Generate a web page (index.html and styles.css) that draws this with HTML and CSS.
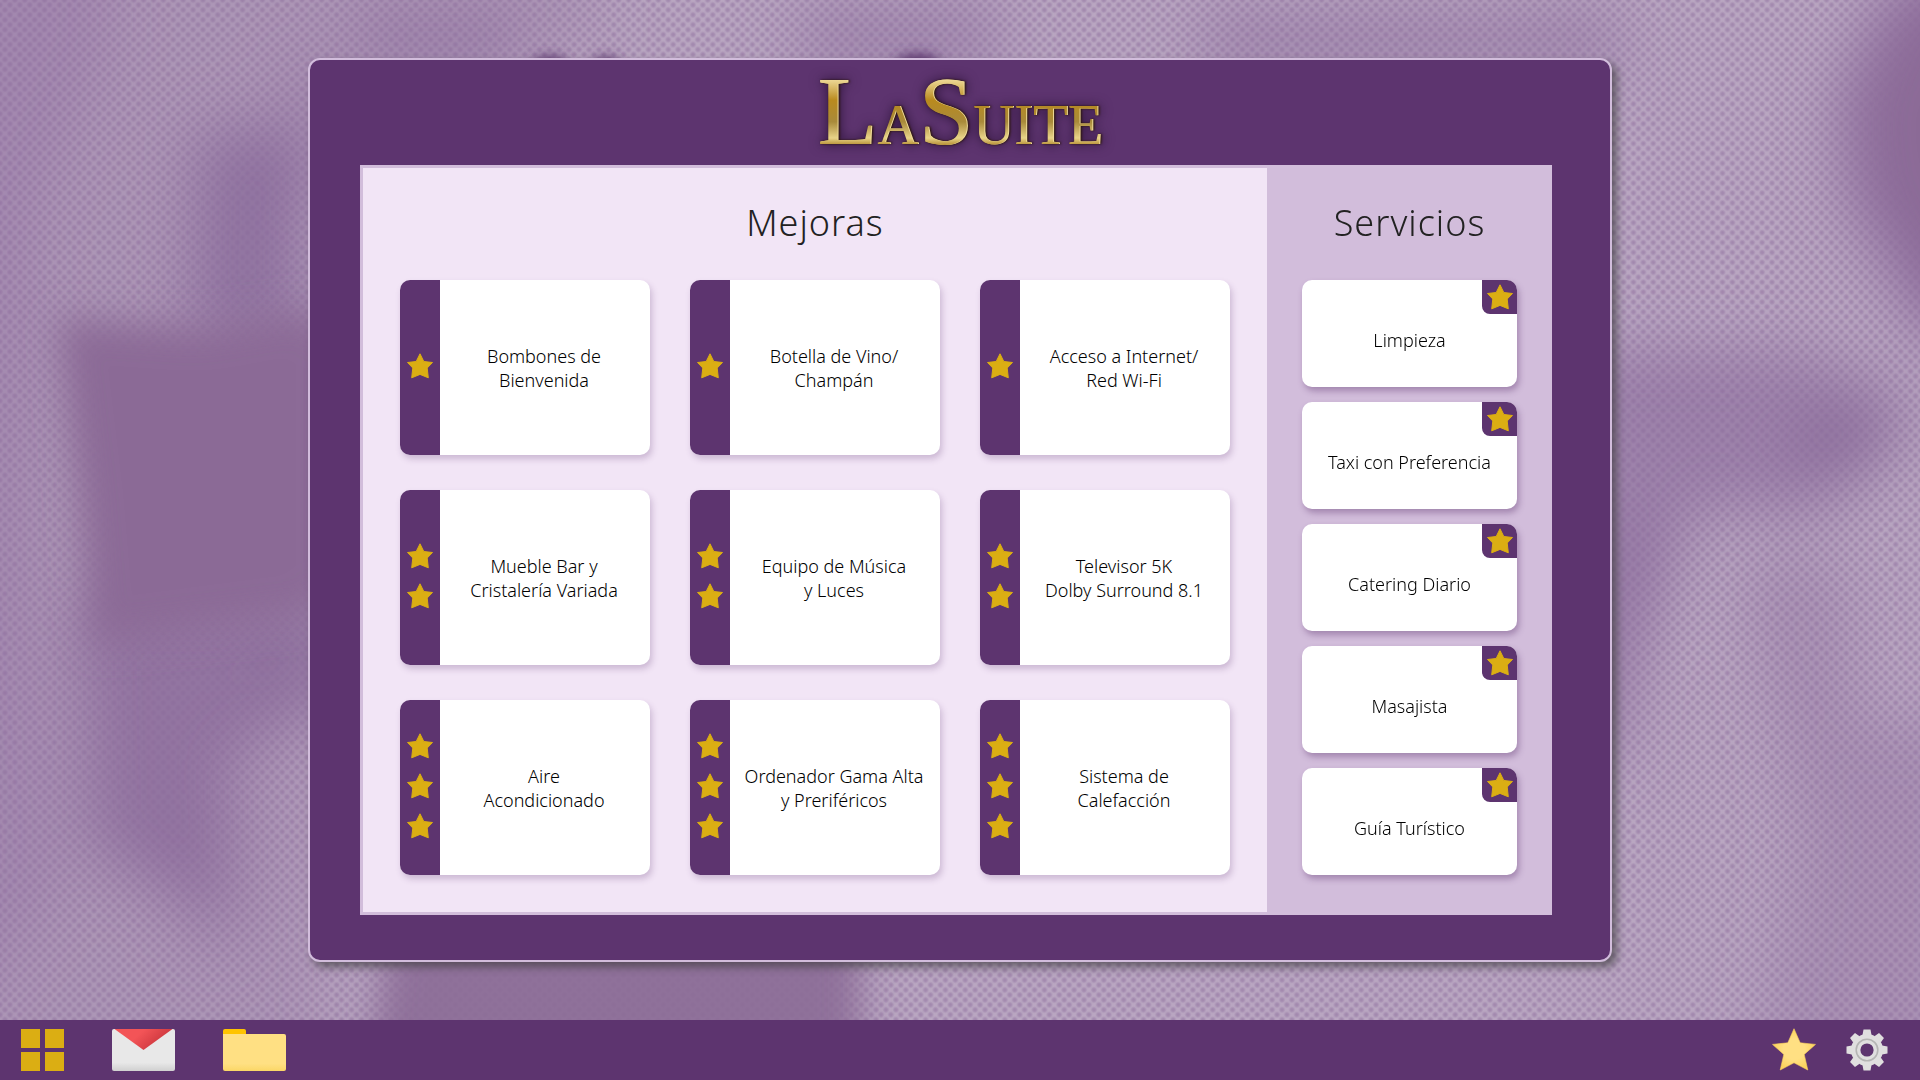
FILE: index.html
```html
<!DOCTYPE html>
<html lang="es"><head><meta charset="utf-8"><title>LaSuite</title><link rel="stylesheet" href="styles.css"></head>
<body>
<svg class="wallpaper" viewBox="0 0 1920 1080" preserveAspectRatio="xMidYMid slice" aria-hidden="true">
<defs>
<radialGradient id="dot"><stop offset="0" stop-color="#8b6b9b" stop-opacity=".5"/><stop offset=".45" stop-color="#8b6b9b" stop-opacity=".42"/><stop offset="1" stop-color="#8b6b9b" stop-opacity="0"/></radialGradient>
<pattern id="dots" width="7" height="7" patternUnits="userSpaceOnUse" patternTransform="rotate(45)"><circle cx="3.500" cy="3.500" r="3.500" fill="url(#dot)"/></pattern>
<filter id="soft" filterUnits="userSpaceOnUse" x="-200" y="-200" width="2320" height="1480"><feGaussianBlur stdDeviation="30"/></filter>
<filter id="edge" filterUnits="userSpaceOnUse" x="-200" y="-200" width="2320" height="1480"><feGaussianBlur stdDeviation="18"/></filter>
<filter id="smudge" filterUnits="userSpaceOnUse" x="400" y="0" width="700" height="140"><feGaussianBlur stdDeviation="6"/></filter>
</defs>
<rect width="1920" height="1080" fill="#b9a6c1"/>
<rect width="1920" height="1080" fill="url(#dots)"/>
<g filter="url(#soft)" fill="#8b6b9b">
<path d="M-100-100H600V60H330V1100H-100Z" opacity=".28"/>
<path d="M-100-100H110V40L30 220V560L60 880L-100 1100Z" opacity=".3"/>
<path d="M200 130H300V340H190Z" opacity=".8"/>
<path d="M290 60H340V200H270Z" opacity=".4"/>
<path d="M80 600H310V700L230 760L220 920L90 850Z" opacity=".75"/>
<path d="M280 590H420V720H260Z" opacity=".6"/>
<path d="M190 800H240V950H190Z" opacity=".4"/>
<path d="M360 10H520V90H350ZM800 0H1000V80H800ZM1200 10H1620V80H1200Z" opacity=".5"/>
<path d="M1560 350H1800L1900 390V440L1820 520L1700 510L1600 740Z" opacity=".6"/>
<path d="M1600 500L1650 540L1620 760H1560Z" opacity=".6"/>
<path d="M1820 400L1910 425L1850 480L1780 460Z" opacity=".8"/>
<path d="M1740 560L1840 560L1860 720H1980V1100H1740L1800 850Z" opacity=".35"/>
<path d="M2000-60L1890-10L1840 100L1850 200L1930 340H2000Z"/>
<path d="M2000 0H1920L1870 100L1880 190L1950 300H2000Z" fill="#8b6b96"/>
</g>
<g filter="url(#edge)" fill="#8b6b96">
<path d="M58 318L200 328L320 306V615L190 632L92 645L80 500Z"/>
<path d="M240 330H340V600H120Z"/>
<path d="M390 930H860V1060H370Z" opacity=".9"/>
</g>
<g filter="url(#smudge)" fill="#5b346e"><ellipse cx="550" cy="65" rx="18" ry="9"/><ellipse cx="606" cy="65" rx="14" ry="8"/><ellipse cx="918" cy="64" rx="22" ry="10"/></g>
</svg>
<svg class="defs" aria-hidden="true"><defs>
<symbol id="star" viewBox="0 0 26 26"><path fill="#dbae13" stroke="#dbae13" stroke-width="1" stroke-linejoin="round" d="M13 .8L16.8 8.5L25.5 9.5L20.2 15L21.3 24.8L13 21.4L4.7 24.8L5.8 15L.5 9.5L9.2 8.5Z"/></symbol>
</defs></svg>
<div class="desktop">
<main class="window">
<header class="titlebar"><h1 class="logo">
<svg viewBox="0 0 300 100" role="img" aria-label="LaSuite"><defs><linearGradient id="gold" x1="0" y1="0" x2="0" y2="1"><stop offset=".2" stop-color="#f0dc9c"/><stop offset=".4" stop-color="#b98a1e"/><stop offset=".6" stop-color="#a98a3a"/><stop offset=".75" stop-color="#e9d488"/><stop offset=".85" stop-color="#9a6a08"/></linearGradient></defs>
<text class="logo-text" fill="url(#gold)" x="154" y="84" text-anchor="middle"><tspan class="cap">L</tspan><tspan class="small">A</tspan><tspan class="cap">S</tspan><tspan class="small">UITE</tspan></text></svg>
</h1></header>
<div class="content">
<section class="upgrades">
<h2 class="heading">Mejoras</h2>
<div class="grid">
<button class="card"><span class="rating"><svg><use href="#star"/></svg></span><span class="label">Bombones de<br>Bienvenida</span></button>
<button class="card"><span class="rating"><svg><use href="#star"/></svg></span><span class="label">Botella de Vino/<br>Champán</span></button>
<button class="card"><span class="rating"><svg><use href="#star"/></svg></span><span class="label">Acceso a Internet/<br>Red Wi-Fi</span></button>
<button class="card"><span class="rating"><svg><use href="#star"/></svg><svg><use href="#star"/></svg></span><span class="label">Mueble Bar y<br>Cristalería Variada</span></button>
<button class="card"><span class="rating"><svg><use href="#star"/></svg><svg><use href="#star"/></svg></span><span class="label">Equipo de Música<br>y Luces</span></button>
<button class="card"><span class="rating"><svg><use href="#star"/></svg><svg><use href="#star"/></svg></span><span class="label">Televisor 5K<br>Dolby Surround 8.1</span></button>
<button class="card"><span class="rating"><svg><use href="#star"/></svg><svg><use href="#star"/></svg><svg><use href="#star"/></svg></span><span class="label">Aire<br>Acondicionado</span></button>
<button class="card"><span class="rating"><svg><use href="#star"/></svg><svg><use href="#star"/></svg><svg><use href="#star"/></svg></span><span class="label">Ordenador Gama Alta<br>y Preriféricos</span></button>
<button class="card"><span class="rating"><svg><use href="#star"/></svg><svg><use href="#star"/></svg><svg><use href="#star"/></svg></span><span class="label">Sistema de<br>Calefacción</span></button>
</div>
</section>
<section class="services">
<h2 class="heading">Servicios</h2>
<div class="list">
<button class="service">Limpieza<span class="badge"><svg><use href="#star"/></svg></span></button>
<button class="service">Taxi con Preferencia<span class="badge"><svg><use href="#star"/></svg></span></button>
<button class="service">Catering Diario<span class="badge"><svg><use href="#star"/></svg></span></button>
<button class="service">Masajista<span class="badge"><svg><use href="#star"/></svg></span></button>
<button class="service">Guía Turístico<span class="badge"><svg><use href="#star"/></svg></span></button>
</div>
</section>
</div>
</main>
</div>
<nav class="taskbar">
<div class="group apps">
<button class="task" aria-label="Inicio"><svg width="43" height="42" viewBox="0 0 43 42"><path fill="#dbae13" d="M0 0H19V19H0ZM24 0H43V19H24ZM0 23H19V42H0ZM24 23H43V42H24Z"/></svg></button>
<button class="task" aria-label="Correo"><svg width="63" height="42" viewBox="0 0 63 42"><defs><linearGradient id="flap" x1="0" y1="0" x2="1" y2=".4"><stop offset=".45" stop-color="#f35457"/><stop offset=".85" stop-color="#d33c42"/></linearGradient><linearGradient id="paper" x1="0" y1="0" x2="0" y2="1"><stop offset=".8" stop-color="#e8e8e8"/><stop offset="1" stop-color="#d0d0d0"/></linearGradient></defs><rect width="63" height="42" rx="2" fill="url(#paper)"/><path fill="url(#flap)" d="M2.500 0H60.500L31.500 21Z"/></svg></button>
<button class="task" aria-label="Archivos"><svg width="63" height="42" viewBox="0 0 63 42"><defs><linearGradient id="folder" x1="0" y1="0" x2="0" y2="1"><stop offset=".8" stop-color="#ffe083"/><stop offset="1" stop-color="#fbd766"/></linearGradient></defs><path fill="#ffc400" d="M0 8V2Q0 0 2 0H21Q23 0 23 2V8Z"/><path fill="url(#folder)" d="M0 5H61Q63 5 63 7V40Q63 42 61 42H2Q0 42 0 40Z"/></svg></button>
</div>
<div class="group tools">
<button class="task" aria-label="Favoritos"><svg width="44" height="43" viewBox="0 0 44 43"><defs><radialGradient id="shine"><stop offset=".5" stop-color="#ffe083"/><stop offset="1" stop-color="#fbd35c"/></radialGradient></defs><path fill="url(#shine)" stroke="#fbd35c" stroke-width=".6" stroke-linejoin="round" d="M22 .7L28.200 14.800L43.500 16.400L32.200 26.400L35.800 42L22 34.800L8.200 42L11.800 26.400L.5 16.400L15.800 14.800Z"/></svg></button>
<button class="task" aria-label="Ajustes"><svg width="42" height="42" viewBox="-21 -21 42 42"><g fill="#e0dfdf"><circle r="16"/><g id="tooth"><path d="M-4.500-15L-3.500-20.500H3.500L4.500-15ZM-4.500 15L-3.500 20.500H3.500L4.500 15Z"/></g><use href="#tooth" transform="rotate(45)"/><use href="#tooth" transform="rotate(90)"/><use href="#tooth" transform="rotate(135)"/></g><circle r="10.800" fill="none" stroke="#b5b5b4" stroke-width="1.600"/><circle r="6.600" fill="#5d346f"/></svg></button>
</div>
</nav>
</body></html>
```
FILE: styles.css
```css
* { box-sizing: border-box; }
body { margin: 0; min-height: 100vh; display: flex; flex-direction: column; font-family: "Noto Sans", "Open Sans", sans-serif; font-weight: 300; color: #000; }
button { border: 0; padding: 0; margin: 0; background: none; font: inherit; color: inherit; cursor: pointer; }
.wallpaper { position: fixed; inset: 0; width: 100%; height: 100%; z-index: -1; }
.defs { position: absolute; width: 0; height: 0; }
.desktop { flex: 1; display: flex; align-items: center; justify-content: center; padding: 24px; }
.window { width: 100%; max-width: 1304px; padding: 0 58px 45px 50px; background: #5d346f; border: 2px solid #d2bddc; border-radius: 12px; box-shadow: 5px 5px 8px rgba(60, 60, 60, .65); }
.titlebar { display: flex; justify-content: center; height: 105px; }
.logo { margin: 0; }
.logo svg { display: block; width: 300px; height: 100px; overflow: visible; }
.logo-text { font-family: "Liberation Serif", serif; font-weight: 400; filter: drop-shadow(1px 0 0 #f0dc9c) drop-shadow(1px 0 1px #2a1402) drop-shadow(0 0 6px #2c1238); }
.cap { font-size: 98px; }
.small { font-size: 57px; }
.content { display: flex; background: #d2bddb; }
.upgrades { flex: 1; padding: 0 37px 37px; background: #f2e5f6; border: 3px solid #d2bddb; }
.services { width: 282px; padding: 3px 35px 40px 32px; }
.heading { margin: 0; height: 112px; padding-top: 30px; font-size: 36px; line-height: 50px; font-weight: 300; letter-spacing: 1px; text-align: center; color: #222; }
.grid { display: grid; grid-template-columns: repeat(3, 1fr); gap: 35px 40px; }
.card { display: flex; height: 175px; border-radius: 10px; overflow: hidden; background: #fff; box-shadow: 2px 4px 6px rgba(93, 52, 111, .25); }
.rating { width: 40px; height: 100%; padding-bottom: 3px; display: flex; flex-direction: column; align-items: center; justify-content: center; gap: 14px; background: #5d346f; }
.rating svg, .badge svg { width: 26px; height: 26px; }
.label { flex: 1; align-self: center; padding-right: 2px; font-size: 18px; line-height: 24px; text-align: center; }
.list { display: grid; gap: 15px; }
.service { position: relative; height: 107px; padding-top: 12px; border-radius: 10px; background: #fff; box-shadow: 2px 4px 6px rgba(93, 52, 111, .4); font-size: 18px; line-height: 24px; }
.badge { position: absolute; top: 0; right: 0; width: 35px; height: 34px; display: grid; place-items: center; background: #5d346f; border-radius: 0 10px 0 8px; }
.taskbar { height: 60px; display: flex; align-items: center; justify-content: space-between; padding: 0 32px 1px 21px; background: #5d346f; }
.group { display: flex; align-items: center; }
.apps { gap: 48px; }
.tools { gap: 30px; }
.task svg { display: block; }
```
